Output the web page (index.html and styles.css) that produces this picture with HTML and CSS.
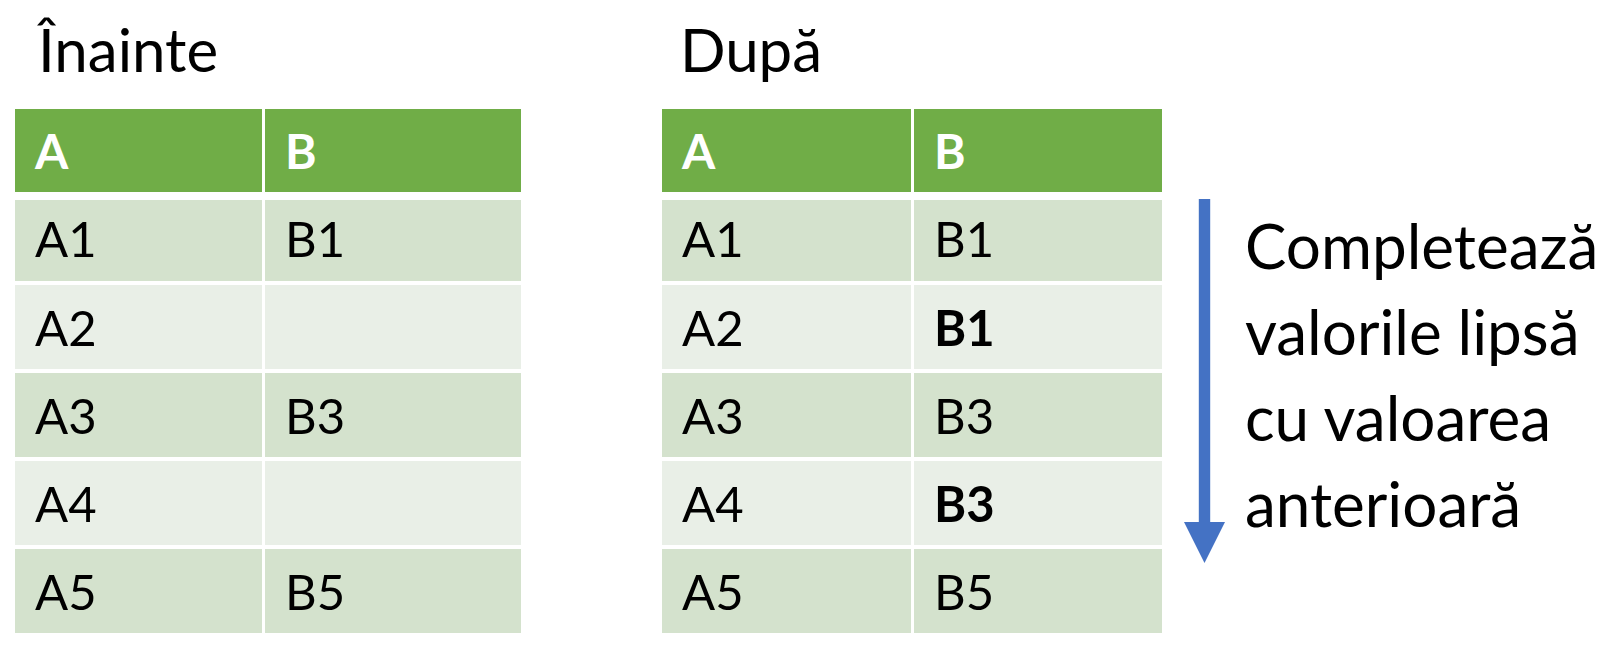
FILE: index.html
```html
<!DOCTYPE html>
<html lang="ro">
<head>
<meta charset="utf-8">
<title>Înainte / După</title>
<link rel="stylesheet" href="styles.css">
</head>
<body>
<main class="page">
  <section class="panel panel-before">
    <h1 class="title">Înainte</h1>
    <div class="table table-before">
      <div class="cell head">A</div><div class="cell head">B</div>
      <div class="cell dark first">A1</div><div class="cell dark first">B1</div>
      <div class="cell light">A2</div><div class="cell light"></div>
      <div class="cell dark">A3</div><div class="cell dark">B3</div>
      <div class="cell light">A4</div><div class="cell light"></div>
      <div class="cell dark">A5</div><div class="cell dark">B5</div>
    </div>
  </section>
  <section class="panel panel-after">
    <h1 class="title">După</h1>
    <div class="table table-after">
      <div class="cell head">A</div><div class="cell head">B</div>
      <div class="cell dark first">A1</div><div class="cell dark first">B1</div>
      <div class="cell light">A2</div><div class="cell light filled">B1</div>
      <div class="cell dark">A3</div><div class="cell dark">B3</div>
      <div class="cell light">A4</div><div class="cell light filled">B3</div>
      <div class="cell dark">A5</div><div class="cell dark">B5</div>
    </div>
  </section>
  <svg class="arrow" width="41" height="364" viewBox="0 0 41 364" aria-hidden="true">
    <rect x="14.8" y="0" width="11.4" height="324" fill="#4472C4"/>
    <polygon points="0,323 41,323 20.5,364" fill="#4472C4"/>
  </svg>
  <p class="note">Completează<br>valorile lipsă<br>cu valoarea<br>anterioară</p>
</main>
</body>
</html>
```
FILE: styles.css
```css
html, body {
  margin: 0;
  padding: 0;
  background: #ffffff;
}
body {
  font-family: "Lato", "Open Sans", sans-serif;
  color: #000;
  width: 1610px;
  height: 656px;
  overflow: hidden;
}
.page {
  display: flex;
  align-items: flex-start;
}
.panel-before {
  margin-left: 15px;
}
.panel-after {
  margin-left: 141px;
}
.title {
  margin: 0 0 30px 0;
  padding: 19px 0 0 23px;
  height: 60px;
  font-size: 60px;
  line-height: 60px;
  font-weight: 400;
}
.panel-after .title {
  padding-left: 18px;
}
.table {
  display: grid;
  grid-template-rows: 87px 81px 84px 84px 84px 84px;
  column-gap: 3px;
  row-gap: 4px;
}
.table-before {
  grid-template-columns: 247px 256px;
}
.table-after {
  grid-template-columns: 249px 248px;
}
.cell {
  padding-left: 20px;
  font-size: 49px;
  line-height: 84px;
  white-space: nowrap;
}
.head {
  background: #70AD47;
  color: #fff;
  font-weight: 700;
  font-size: 48px;
  height: 83px;
  line-height: 84px;
}
.dark {
  background: #D4E2CD;
}
.first {
  line-height: 76px;
}
.light {
  background: #E9EFE7;
}
.filled {
  font-weight: 700;
}
.arrow {
  display: block;
  margin-left: 22px;
  margin-top: 199px;
  flex: none;
}
.note {
  margin: 202px 0 0 20px;
  font-size: 62px;
  line-height: 86px;
  white-space: nowrap;
}
```
